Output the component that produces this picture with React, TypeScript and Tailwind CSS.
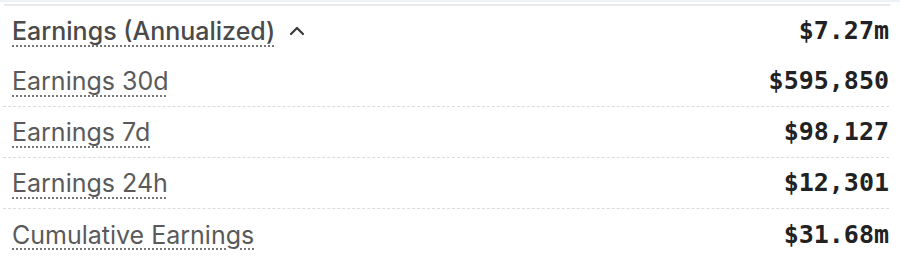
import React from "react";

const rows = [
  { label: "Earnings 30d", value: "$595,850", sep: true },
  { label: "Earnings 7d", value: "$98,127", sep: true },
  { label: "Earnings 24h", value: "$12,301", sep: true },
  { label: "Cumulative Earnings", value: "$31.68m", sep: false },
];

export default function App() {
  return (
    <div className="w-[900px] h-[260px] bg-white overflow-hidden font-['Inter',sans-serif]">
      <div className="h-[2px] bg-[#eef1f6]" />
      <div className="px-[4px] pt-[2px]">
        <div className="h-[2px] bg-[#e8e8ea] mr-[6px]" />
      </div>
      <div className="pl-[3px] pr-[11px]">
        <div className="flex items-center justify-between h-[50px] pl-[9px]">
          <div className="flex items-center gap-[13px]">
            <span className="text-[25px] leading-[30px] font-medium text-[#4a4a4a] underline decoration-dotted decoration-[#777] underline-offset-[5px] decoration-2">
              Earnings (Annualized)
            </span>
            <svg width="18" height="18" viewBox="0 0 18 18" fill="none" stroke="#3a3a3a" strokeWidth="2.2" strokeLinecap="round" strokeLinejoin="round">
              <path d="M3 12 L9 6 L15 12" />
            </svg>
          </div>
          <span className="text-[25px] font-bold text-[#222] font-['DejaVu_Sans_Mono',monospace]">$7.27m</span>
        </div>
        {rows.map((r) => (
          <div key={r.label} className={`flex items-center justify-between h-[51px] pl-[9px] ${r.sep ? "border-b border-dashed border-[#dcdcdc]" : ""}`}>
            <span className="text-[25px] leading-[30px] text-[#5a5a5a] underline decoration-dotted decoration-[#777] underline-offset-[5px] decoration-2">
              {r.label}
            </span>
            <span className="text-[25px] font-bold text-[#222] font-['DejaVu_Sans_Mono',monospace]">{r.value}</span>
          </div>
        ))}
      </div>
    </div>
  );
}
